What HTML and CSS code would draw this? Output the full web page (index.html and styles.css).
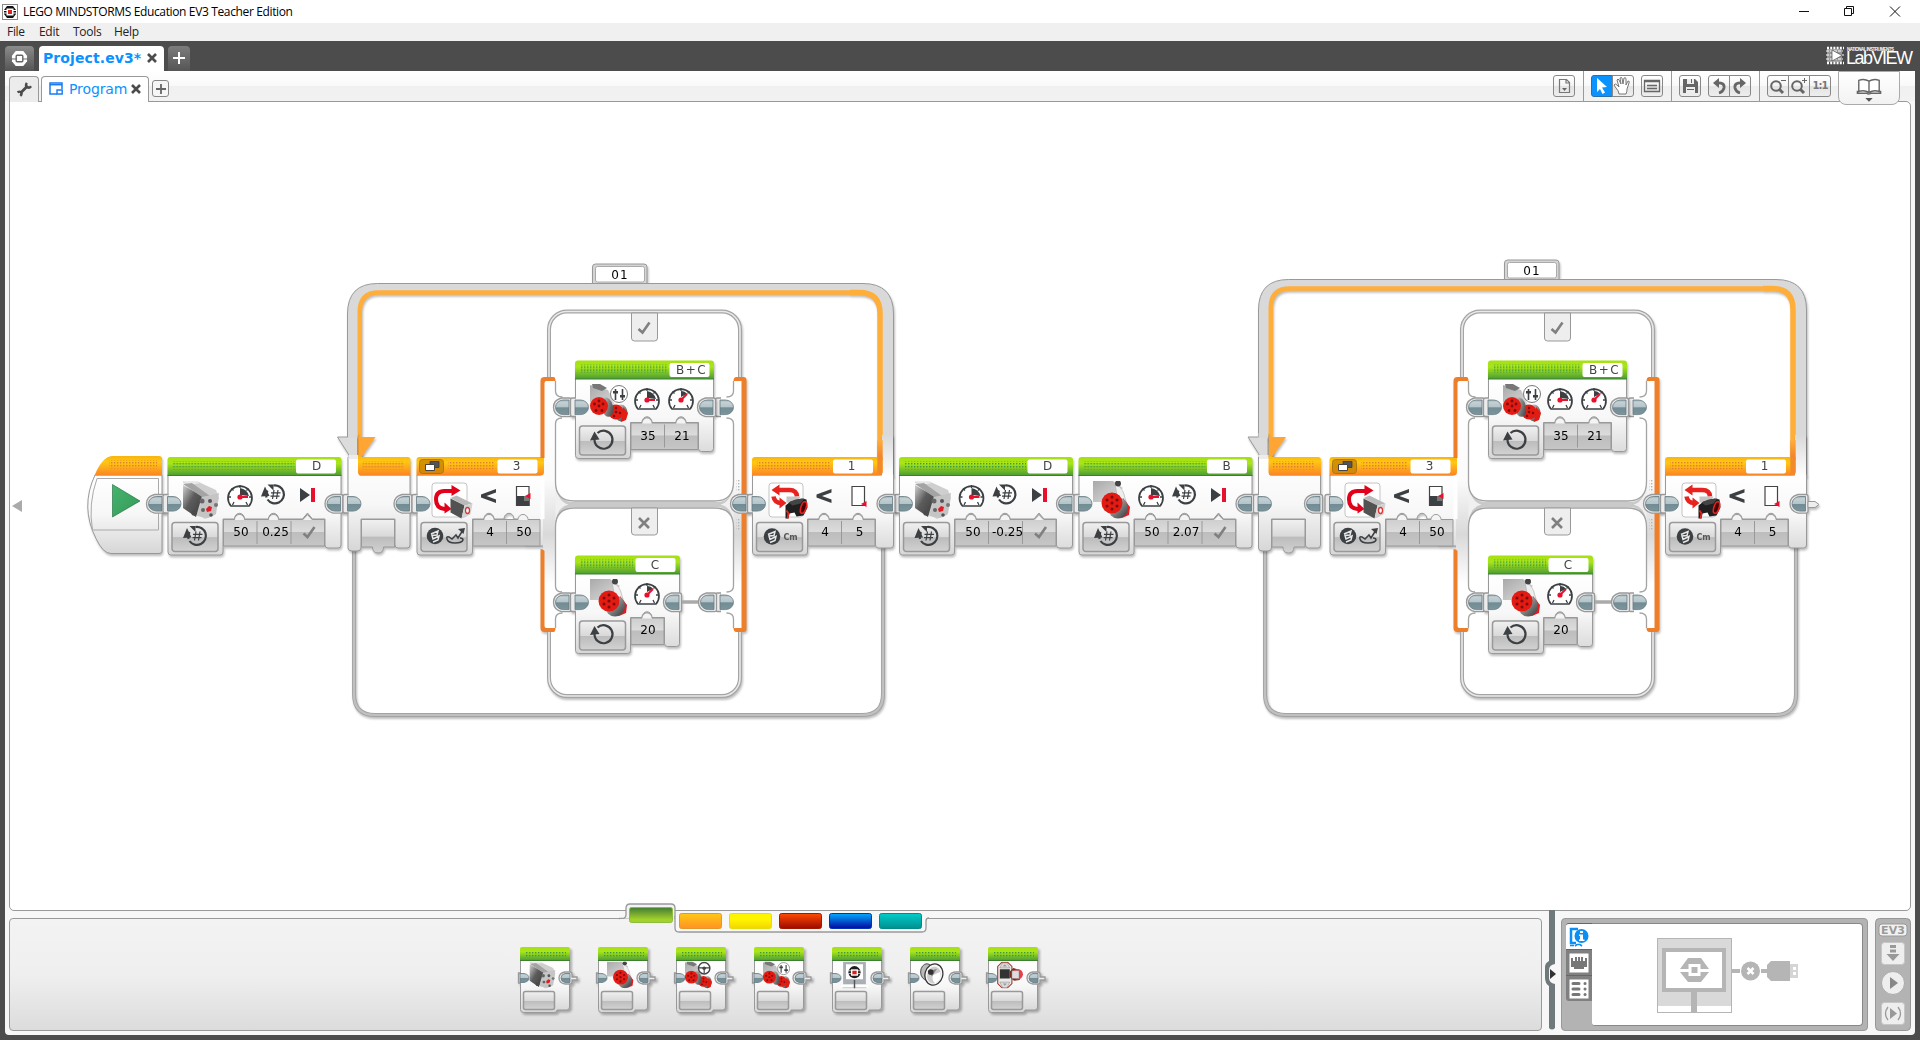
FILE: index.html
```html
<!DOCTYPE html>
<html lang="en">
<head>
<meta charset="utf-8">
<title>LEGO MINDSTORMS Education EV3 Teacher Edition</title>
<link rel="stylesheet" href="styles.css">
</head>
<body>
<svg class="defs" width="0" height="0" aria-hidden="true">
  <defs>
    <linearGradient id="gGreen" x2="0" y2="1"><stop offset="0" stop-color="#a6e010"/><stop offset=".35" stop-color="#a9e51a"/><stop offset="1" stop-color="#4b9c34"/></linearGradient>
    <linearGradient id="gOrange" x2="0" y2="1"><stop offset="0" stop-color="#f9b40c"/><stop offset=".3" stop-color="#ffc814"/><stop offset="1" stop-color="#fb8424"/></linearGradient>
    <linearGradient id="gBody" x2="0" y2="1"><stop offset="0" stop-color="#fff"/><stop offset=".5" stop-color="#f7f7f7"/><stop offset="1" stop-color="#d6d6d6"/></linearGradient>
    <linearGradient id="gParam" x2="0" y2="1"><stop offset="0" stop-color="#c9c9c9"/><stop offset=".55" stop-color="#dcdcdc"/><stop offset=".56" stop-color="#bdbdbd"/><stop offset="1" stop-color="#c6c6c6"/></linearGradient>
    <linearGradient id="gButton" x2="0" y2="1"><stop offset="0" stop-color="#f1f1f1"/><stop offset=".5" stop-color="#d9d9d9"/><stop offset=".52" stop-color="#bcbcbc"/><stop offset="1" stop-color="#d2d2d2"/></linearGradient>
    <linearGradient id="gPort" x2="0" y2="1"><stop offset="0" stop-color="#9db0b6"/><stop offset=".15" stop-color="#c3d0d4"/><stop offset=".5" stop-color="#b5c4c9"/><stop offset=".52" stop-color="#718c94"/><stop offset="1" stop-color="#7d959c"/></linearGradient>
    <linearGradient id="gFade" x2="0" y2="1"><stop offset="0" stop-color="#d9d9d9"/><stop offset="1" stop-color="#fff"/></linearGradient>
    <linearGradient id="gFadeO" x2="0" y2="1"><stop offset="0" stop-color="#ffae3a"/><stop offset="1" stop-color="#f07c28"/></linearGradient>
    <linearGradient id="gColumn" x2="0" y2="1"><stop offset="0" stop-color="#fff"/><stop offset=".4" stop-color="#fbfbfb"/><stop offset=".62" stop-color="#d9d9d9"/><stop offset=".82" stop-color="#fff"/><stop offset="1" stop-color="#fff"/></linearGradient>
    <linearGradient id="gPlay" x2="1" y2="1"><stop offset="0" stop-color="#45b56c"/><stop offset="1" stop-color="#36985a"/></linearGradient>
    <linearGradient id="gMetal" x2="1" y2="1"><stop offset="0" stop-color="#d2d2d2"/><stop offset=".45" stop-color="#5c5c5c"/><stop offset="1" stop-color="#3c3c3c"/></linearGradient>
    <linearGradient id="gPlate" x2="1" y2="1"><stop offset="0" stop-color="#a9a9a9"/><stop offset="1" stop-color="#dedede"/></linearGradient>
    <linearGradient id="gCasing" x2="1" y2="1"><stop offset="0" stop-color="#eee"/><stop offset=".5" stop-color="#888"/><stop offset="1" stop-color="#333"/></linearGradient>
    <pattern id="dotG" width="3" height="3" patternUnits="userSpaceOnUse"><rect width="1.4" height="1.4" fill="#3b9a3c"/></pattern>
    <pattern id="dotO" width="3" height="3" patternUnits="userSpaceOnUse"><rect width="1.4" height="1.4" fill="#e0802a"/></pattern>
    <pattern id="dotX" width="3" height="3" patternUnits="userSpaceOnUse"><rect width="1.4" height="1.4" fill="#b5b5b5"/></pattern>

    <!-- ports -->
    <g id="portIn"><path class="shell" d="M1 37.500H-2.500q-2 0-2 2V54q0 2 2 2H1"/><path class="port" d="M0 39.500h5.500a8 7.300 0 0 1 0 14.600H0z"/></g>
    <g id="portOut"><path class="shell" d="M-.5 37.500h-8q-8 2-8 9.300t8 9.300h8q2 0 2-2V39.500q0-2-2-2z"/><path class="port" d="M-1 39.500h-5.500a8 7.300 0 0 0 0 14.600H-1z"/></g>

    <!-- block bodies with one, two and three parameters -->
    <g id="modeButton"><rect class="button" x="4.500" y="65.500" width="46" height="29" rx="3"/></g>
    <g id="body3">
      <path class="body" d="M.5 18H173.500V88q0 3-3 3H160.500q-3 0-3-3V62H145l-5-6-5 6H111a4.800 5.500 0 0 0-10 0H77a4.800 5.500 0 0 0-10 0H55.500V95q0 3-3 3H3.500q-3 0-3-3Z"/>
      <path class="param" d="M56 62.500H67a5 5 0 0 1 10 0h24a5 5 0 0 1 10 0h24l5-5 5 5h12V89H56Z"/><path class="sep" d="M89.500 64v23M123.500 64v23"/>
      <path class="bump" d="M67.500 63a4.500 5 0 0 1 9 0zM101.500 63a4.500 5 0 0 1 9 0zM136 63l4-4.500 4 4.500z"/>
      <path fill="url(#gGreen)" d="M0 18.500V3q0-3 3-3H171q3 0 3 3V18.500Z"/><path class="rim" d="M0 18.500H174"/>
      <rect fill="url(#dotG)" x="5" y="4" width="122" height="8.500"/><rect class="field" x="128.500" y="2.500" width="40" height="14" rx="2"/>
      <use href="#modeButton"/><use href="#portOut" x="174"/><use href="#portIn"/>
    </g>
    <g id="body2">
      <path class="body" d="M.5 18H138.500V88q0 3-3 3H126.500q-3 0-3-3V62H111a4.800 5.500 0 0 0-10 0H77a4.800 5.500 0 0 0-10 0H55.500V95q0 3-3 3H3.500q-3 0-3-3Z"/>
      <path class="param" d="M56 62.500H67a5 5 0 0 1 10 0h24a5 5 0 0 1 10 0h12V89H56Z"/><path class="sep" d="M89.500 64v23"/>
      <path class="bump" d="M67.500 63a4.500 5 0 0 1 9 0zM101.500 63a4.500 5 0 0 1 9 0z"/>
      <path fill="url(#gGreen)" d="M0 18.500V3q0-3 3-3H136q3 0 3 3V18.500Z"/><path class="rim" d="M0 18.500H139"/>
      <rect fill="url(#dotG)" x="5" y="4" width="87" height="8.500"/><rect class="field" x="94.500" y="2.500" width="40" height="14" rx="2"/>
      <use href="#modeButton"/><use href="#portOut" x="139"/><use href="#portIn"/>
    </g>
    <g id="body1">
      <path class="body" d="M.5 18H104.500V88q0 3-3 3H92.500q-3 0-3-3V62H77a4.800 5.500 0 0 0-10 0H55.500V95q0 3-3 3H3.500q-3 0-3-3Z"/>
      <path class="param" d="M56 62.500H67a5 5 0 0 1 10 0h12V89H56Z"/><path class="bump" d="M67.500 63a4.500 5 0 0 1 9 0z"/>
      <path fill="url(#gGreen)" d="M0 18.500V3q0-3 3-3H102q3 0 3 3V18.500Z"/><path class="rim" d="M0 18.500H105"/>
      <rect fill="url(#dotG)" x="5" y="4" width="53" height="8.500"/><rect class="field" x="60.500" y="2.500" width="40" height="14" rx="2"/>
      <use href="#modeButton"/><use href="#portOut" x="105"/><use href="#portIn"/>
    </g>

    <!-- parameter icons, centred on the origin -->
    <g id="dial"><path class="ink thin" d="M-9 9a12 12 0 1 1 18 0z"/><path class="ink fine" d="M-12 0h3M12 0h-3M0-12v3M-8.500-8.500l2 2M8.500-8.500l-2 2M-7.500 8l1.500-3M7.500 8L6 5"/></g>
    <g id="gaugeHigh"><use href="#dial"/><path fill="#3c4043" d="M0-2V-9q7 1 9 8z"/><circle r="2.600" fill="#e8112d"/><path stroke="#e8112d" stroke-width="2" d="M0 0H8"/></g>
    <g id="gaugeLow"><use href="#dial"/><path fill="#3c4043" d="M0-3V-9q4 0 6 3z"/><circle r="2.600" fill="#e8112d"/><path stroke="#e8112d" stroke-width="2" d="M0 0L6-6"/></g>
    <g id="turns"><path class="ink ring-arrow" d="M-1.500-9A9 9 0 1 1-7.500 5"/><path class="ink ring-arrow" d="M-8.500 3q-.8-4 1-7"/><path fill="#3c4043" d="M-14 2l4-10 4.500 9.500zM-7.500-10h6v6z"/><path class="ink hash" d="M-1-4.500L-2.500 4.500M3-4.500L1.500 4.500M-4-1.700H5.500M-4.500 1.700H4.500"/></g>
    <g id="forever"><path class="ink ring-arrow" d="M-8.500 0a9 9 0 1 0 3-6.500"/><path fill="#3c4043" d="M-13 1L-8.500-8-3.500 0z"/></g>
    <g id="brake"><path fill="#3c4043" d="M-8-7L2 0-8 7z"/><rect x="3" y="-7" width="4" height="14" fill="#e8112d"/></g>
    <path id="tick" class="glyph" d="M-5.500 1L-1.500 4.500 5.500-5.500"/>
    <path id="cross" class="glyph" d="M-5-5L5 5M5-5L-5 5"/>
    <path id="less" d="M7.500-7V-3.500L-2 0 7.500 3.500V7L-7.500 1.500V-1.500z" fill="#3c4043"/>
    <g id="sonic"><circle r="8.300" fill="#3c4043"/><path fill="none" stroke="#e8e8e8" stroke-width="1.500" d="M-4-2L3-5 2-1-3-.5-2 3 4 0 3 4-2 6"/></g>

    <!-- motors and other 38px pictures -->
    <symbol id="medium" viewBox="0 0 38 38"><path fill="#f8f8f8" stroke="#ccc" stroke-width=".7" d="M1 1h15l16 8-12 2z"/><path fill="#cfcfcf" d="M10 3l8-1 16 7 3 8-4 17-10 4-9-5z"/><path fill="url(#gMetal)" d="M1 4L20 15 14 36 1 27z"/><path fill="#a4a4a4" d="M1 3l9-1 18 13-8 1z"/><path fill="#c5c5c5" d="M21 16l16-4-3 21-8 4-11-2z"/><circle cx="12" cy="32" r="2.600" fill="#4a4a4a"/><circle cx="20" cy="20" r="2.500" fill="#666"/><circle cx="28" cy="20" r="2" fill="#555"/><circle cx="34" cy="24" r="2" fill="#777"/><circle cx="21" cy="29" r="2" fill="#666"/><circle cx="29" cy="34" r="1.800" fill="#555"/><path fill="#e31b23" d="M24 28l3-3 3 1-1 4-4 1z"/></symbol>
    <symbol id="large" viewBox="0 0 38 38"><path fill="url(#gPlate)" d="M0 0h20l10 7-16 14H0z"/><path fill="#eee" stroke="#aaa" stroke-width=".6" d="M22 3q8 3 10 14l4 12-9 5-3-20z"/><circle cx="25" cy="2.500" r="3" fill="#444"/><path fill="#e31b23" d="M30 17l7 9-1 8-7 3z"/><ellipse cx="25" cy="27" rx="10" ry="10.500" fill="url(#gCasing)"/><circle cx="19" cy="22" r="10.500" fill="#e31b12"/><g fill="#7a0d0d"><circle cx="19" cy="22" r="1.600"/><circle cx="19" cy="16" r="1.500"/><circle cx="24" cy="19" r="1.500"/><circle cx="24" cy="25" r="1.500"/><circle cx="19" cy="28" r="1.500"/><circle cx="14" cy="25" r="1.500"/><circle cx="14" cy="19" r="1.500"/></g></symbol>
    <symbol id="pair" viewBox="0 0 38 38"><path fill="url(#gPlate)" d="M0 1l18 5 8 17-10 2L0 18z"/><path fill="#777" d="M2 0h8l7 4-5 3-9-3z"/><ellipse cx="31" cy="29" rx="6.500" ry="8.500" fill="url(#gCasing)"/><path fill="#e31b12" d="M33 23l5 6-2 7-5 2z"/><circle cx="26" cy="28" r="7.500" fill="#e31b12"/><ellipse cx="17" cy="23" rx="6" ry="10" fill="url(#gCasing)" transform="rotate(-15 17 23)"/><circle cx="9" cy="22" r="9" fill="#e31b12"/><g fill="#7a0d0d"><circle cx="9" cy="22" r="1.400"/><circle cx="9" cy="17" r="1.400"/><circle cx="4.500" cy="20" r="1.400"/><circle cx="13" cy="20" r="1.400"/><circle cx="6" cy="26.500" r="1.400"/><circle cx="12" cy="26.500" r="1.400"/><circle cx="26" cy="28" r="1.300"/><circle cx="26" cy="24" r="1.200"/><circle cx="30" cy="29" r="1.200"/><circle cx="24" cy="32" r="1.200"/></g></symbol>
    <symbol id="tank" viewBox="0 0 38 38"><use href="#pair" width="38" height="38"/><circle cx="29" cy="10" r="8.500" fill="#fff" stroke="#777"/><path class="ink" stroke-width="1.500" d="M25.500 5v11M32.500 5v11"/><path fill="#3c4043" d="M23 7h5v2.500h-5zM30 11h5v2.500h-5z"/></symbol>
    <symbol id="steer" viewBox="0 0 38 38"><use href="#pair" width="38" height="38"/><circle cx="27" cy="9.500" r="8" fill="#fff" stroke="#444" stroke-width="2"/><path class="ink" d="M19 9h16M27 9v8"/><circle cx="27" cy="9.500" r="2.500" fill="#444"/></symbol>
    <symbol id="display" viewBox="0 0 38 38"><path fill="#a9afb2" d="M3 0h32v32H3z"/><path fill="#fff" d="M7 4h24v21H7zM0 33h16v4H0zm22 0h16v4H22z"/><path fill="#d4d4d4" d="M2 36h34v2H2z"/><circle cx="19" cy="15" r="8.500" fill="#1d1d1d"/><path stroke="#fff" d="M11 13h16M11 17h16"/><rect x="14" y="11" width="10" height="9" fill="#fff"/><rect x="16" y="13" width="6" height="5" fill="#e31b12"/><path stroke="#555" stroke-width="2" d="M19 26v12"/></symbol>
    <symbol id="sound" viewBox="0 0 38 38"><ellipse cx="11" cy="15" rx="10" ry="13" fill="#bbb" stroke="#444" stroke-width="1.500"/><ellipse cx="22" cy="19" rx="14" ry="17" fill="#f6f6f6" stroke="#333" stroke-width="2" transform="rotate(15 22 19)"/><ellipse cx="22" cy="20" rx="10.500" ry="13.500" fill="#ccc" transform="rotate(15 22 20)"/><path fill="#fff" d="M20 20l12-5q2 12-8 18-5-4-4-13z"/><path fill="#888" d="M13 14l14-4-8 12z"/><circle cx="17" cy="15" r="4.500" fill="#333"/></symbol>
    <symbol id="buttons" viewBox="0 0 38 38"><path fill="#e9e9e9" stroke="#a33322" stroke-width="1.500" d="M7 1h8l6 6v24l-6 6H7l-6-6V7z"/><path fill="#ddd" stroke="#777" stroke-width=".6" d="M8 2h6l4 7H4zM4 29h14l-4 8H8z"/><path fill="#333" d="M4 11h14v13H4z"/><path fill="#7b2a22" d="M18 14l5-5 9 3v14l-8 1-6-5z"/><path fill="#999" d="M8 7l3-3 3 3zM8 31l3 3 3-3z"/><circle cx="29" cy="18" r="7.500" fill="#e4404a"/><path fill="#ddd" stroke="#777" stroke-width=".6" d="M21 13h10v11H21z"/></symbol>

    <!-- infrared switch icon and loop-end icon -->
    <g id="switchIcon"><rect class="iconbox" x=".5" y=".5" width="35" height="34" rx="3"/><path fill="none" stroke="#e2001a" stroke-width="4" d="M21 8.500H13Q4.500 8.500 4.500 17T13 26.500H15"/><path fill="#e2001a" d="M20 2.500l9 5.500-9 5.500zM13 20l7 6.500-7 4.500z"/><path fill="#b9b9b9" d="M19 15.500L25 13l16 8-8 2z"/><path fill="#525252" d="M19 16l14 7-3 13-11-6z"/><path fill="#d2d2d2" d="M33 23l8-2-2 11-9 4z"/><ellipse cx="36" cy="28" rx="2" ry="3" fill="#fff" stroke="#d33" stroke-width="1.300"/></g>
    <g id="endIcon"><rect class="iconbox" x=".5" y=".5" width="34" height="34" rx="3"/><path fill="none" stroke="#e8221e" stroke-width="4.500" d="M10 7.500H21Q28 7.500 28.500 14M5 14Q6 20.500 13 20.500"/><path fill="#e8221e" d="M3 7.500L11 2v11zM11 15l7 5.500L11 26z"/><path fill="#c4c4c4" d="M18 14h14l-3 6H18z"/><path fill="#1f1f1f" d="M17 23l5-4 11-3 5 1 1 8-4 8-7 1-2-4-5 1-1 5h-3z"/><path fill="#444" d="M20 20l7-3 9-1-4 5-8 2z"/><ellipse cx="35" cy="25" rx="2.600" ry="6" fill="#400" stroke="#e8221e" stroke-width="1.600" transform="rotate(18 35 25)"/><path fill="none" stroke="#e8221e" stroke-width="1.800" d="M18 28l2 3-1 5"/></g>
    <g id="bounce"><path class="ink arrow-line" d="M-8 3q-1-3 2-2l3 2 4-4 2 3 5-8M-8 3q1 4 8 4t8-3q0-2-3-2"/><path fill="#3c4043" d="M10-8l-7 1 5.500 5z"/></g>

    <!-- loop entry block, origin at its left edge and header top -->
    <g id="loopStart">
      <path fill="#dcdcdc" stroke="#999" d="M0-20H-10L.500-3.500 2 0H10V-20z"/><path fill="#d9d9d9" d="M.5-24h9.500v5H.5z"/>
      <path fill="#ffa533" d="M11-20H28L13.500 1H11z"/>
      <path class="body" d="M.5 0H12V18H62.500V88q0 3-3 3H50.500q-3 0-3-3V62H13.500V91q0 3-4 3H4.500q-4 0-4-3Z"/><path fill="#ececec" d="M1-2h9.500v4H1z"/>
      <path fill="url(#gButton)" stroke="#999" d="M14 62.500H47V90H36q0 6-5.500 6T25 90H14z"/>
      <path fill="url(#gOrange)" d="M10.500-2V15q0 3.500 3.500 3.500H63V3q0-3-3-3H14z"/><rect fill="url(#dotO)" x="15" y="4" width="41" height="8.500"/>
      <use href="#portOut" x="63"/><use href="#portIn"/>
    </g>

    <!-- switch with its two cases -->
    <g id="switchBlock">
      <rect class="frameO" x="549" y="311.500" width="191" height="384.500" rx="18"/><rect class="frameI" x="549" y="311.500" width="191" height="384.500" rx="18"/>
      <path class="body" d="M417 475H545V546H525V519H514a4.800 5.500 0 0 0-10 0H494a4.800 5.500 0 0 0-10 0H472.500V552q0 3-3 3H420q-3 0-3-3z"/>
      <path class="param" d="M473 519.500H484a5 5 0 0 1 10 0h24a5 5 0 0 1 10 0h12V546H473Z"/><path class="sep" d="M506.500 521v23"/>
      <path class="bump" d="M484.500 520a4.500 5 0 0 1 9 0zM518.500 520a4.500 5 0 0 1 9 0z"/>
      <path fill="url(#gColumn)" d="M543 380h13v249h-13z"/><path fill="url(#gColumn)" d="M733 380h9v249h-9z"/>
      <path fill="#fff" d="M540.500 475h4v44h-4z"/>
      <path fill="#c9c9c9" d="M556 484q2 18 18 18h142q16 0 17-18v42q-1-19-17-19H574q-16 0-18 19z"/><path fill="#f0f0f0" d="M555.500 486q3 16 13 18.500-10 2-13 16zM733.500 486q-3 16-13 18.500 10 2 13 16z"/>
      <path fill="#fff" d="M556 400V482q0 19 19 19H714q19 0 19-19V400zM556 600V527q0-19 19-19H714q19 0 19 19V600z"/>
      <path class="edge" d="M555.500 381V391q0 6 7 6M562 418q-6.500 0-6.500 6V482q0 19 19 19H714.500q19 0 19-19V424q0-6-7-6M733.500 381v10q0 6-7 6M562 592q-6.500 0-6.500-6V527q0-19 19-19H714.500q19 0 19 19V586q0 6-7 6M555.500 628V619q0-6 7-6M733.500 628V619q0-6-7-6"/>
      <path fill="url(#gOrange)" d="M416.500 475.500V460q0-3 3-3H544V472q0 3.500-3.500 3.500z"/>
      <path class="ocol" d="M540.500 458V381q0-4 4-4h9q2 0 2 4h-9q-2 0-2 2v75zM540.500 549v79q0 4 4 4h9q2 0 2-4h-9q-2 0-2-2V551q-1-2-4-2z"/>
      <path class="ocol" d="M733.500 381q0-4 3-4h7q3 0 3 3V629q0 3-3 3h-7q-3 0-3-4h8V381z"/>
      <rect fill="url(#dotX)" x="736" y="480" width="4" height="12"/><rect fill="url(#dotX)" x="736" y="518" width="4" height="12"/>
      <rect fill="#c98500" opacity=".8" x="419.500" y="459.500" width="24" height="14" rx="3" stroke="#9a6a10"/><path fill="#555" stroke="#333" stroke-width=".7" d="M430 461.500h9v6h-9z"/><path fill="#fff" stroke="#444" d="M425.500 464.500h9v6h-9z"/>
      <rect fill="url(#dotO)" x="448" y="461" width="46" height="8.500"/><rect class="field" x="497.500" y="459.500" width="40" height="14" rx="2"/>
      <use href="#modeButton" x="416.500" y="457"/><use href="#portIn" x="416.500" y="457"/>
      <use href="#switchIcon" x="431.500" y="482.500"/><use href="#less" x="488.500" y="496"/>
      <path fill="#fff" stroke="#444" stroke-width="1.200" d="M516.500 486.500h12.500v19h-12.500z"/><path fill="#3c4043" d="M516.500 496h13v10h-13z"/><path fill="#777" d="M524 496h5v5h-5z"/><path fill="#e8112d" d="M525 496l5.500-3v6z"/>
      <use href="#sonic" x="435" y="536"/><use href="#bounce" x="455" y="536"/>
      <path class="tab" d="M631.500 313H657.500V338q0 3-3 3h-20q-3 0-3-3zM631.500 508H657.500v24q0 3-3 3h-20q-3 0-3-3z"/>
      <use href="#tick" x="644" y="328"/><use href="#cross" x="644" y="523"/>
      <use href="#portOut" x="570" y="360.500"/><use href="#portOut" x="570" y="555.500"/>
      <use href="#portIn" x="720" y="360.500"/><use href="#portIn" x="720" y="555.500"/>
      <use href="#portOut" x="747" y="457"/>
      <g class="drop"><use href="#body2" x="575" y="360.500"/><use href="#body1" x="575" y="555.500"/></g>
      <path stroke="#aaa" stroke-width="3.500" d="M682 602h20"/><use href="#portOut" x="715" y="555.500"/>
      <use href="#tank" x="590" y="384" width="38" height="38"/><use href="#large" x="590" y="579" width="38" height="38"/>
      <use href="#gaugeHigh" x="647" y="400"/><use href="#gaugeLow" x="681" y="400"/><use href="#gaugeLow" x="647" y="595"/>
      <use href="#forever" x="603" y="439.500"/><use href="#forever" x="603" y="634"/>
    </g>

    <!-- loop exit block -->
    <g id="loopEnd">
      <path class="body" d="M752.500 475H893.500V545q0 3-3 3H878.500q-3 0-3-3V519H863a4.800 5.500 0 0 0-10 0H829a4.800 5.500 0 0 0-10 0H807.500V552q0 3-3 3H755.500q-3 0-3-3z"/>
      <path fill="url(#gFade)" d="M882 435H893V477H882z"/><path fill="url(#gFadeO)" d="M877.300 440h5.400v20h-5.400z"/>
      <path class="param" d="M808 519.500H819a5 5 0 0 1 10 0h24a5 5 0 0 1 10 0h12V546H808Z"/><path class="sep" d="M841.500 521v23"/>
      <path class="bump" d="M819.500 520a4.500 5 0 0 1 9 0zM853.500 520a4.500 5 0 0 1 9 0z"/>
      <path fill="url(#gOrange)" d="M752 475.500V460q0-3 3-3H882.500V472q0 3.500-3.500 3.500z"/><path fill="#f28a2c" d="M877.300 457h5.400v14q0 4-4 4h-1.400z"/>
      <rect fill="url(#dotO)" x="757" y="461" width="74" height="8.500"/><rect class="field" x="833" y="459.500" width="40" height="14" rx="2"/>
      <use href="#modeButton" x="752" y="457"/><use href="#portIn" x="752" y="457"/><use href="#portOut" x="893.500" y="457"/>
      <use href="#endIcon" x="768.500" y="482.500"/><use href="#less" x="824" y="496"/>
      <path fill="#fff" stroke="#444" stroke-width="1.200" d="M852 486.500h12.500v19H852z"/><path fill="#e8112d" d="M861 504l5.500-3v6z"/>
      <use href="#sonic" x="772" y="536.500"/>
    </g>

    <!-- palette block, 50px wide -->
    <g id="mini">
      <path class="body" d="M3.500 14H52.500V61q0 3-3 3H40q0 2.500-3 2.500H6.500q-3 0-3-3z"/><path fill="url(#gGreen)" d="M3 14.500V3q0-2 2-2H51q2 0 2 2V14.500z"/><path class="rim" d="M3 14.500H53"/><rect fill="url(#dotG)" x="8" y="5" width="41" height="6"/>
      <rect class="button" x="6.500" y="45.500" width="31" height="18" rx="2"/>
      <path class="shell" d="M4 27H1.500v10H4"/><path class="port" d="M3 27.500h4q5 1 5 4.500t-5 4.500H3z"/><path class="shell" d="M53 26H48q-6 1-6 6t6 6h5q2 0 2-2v-2h5v-3h-5v-3q0-2-2-2z"/><path class="port" d="M53 27.500h-5q-4 1-4 4.500t4 4.500h5z"/>
    </g>
  </defs>
</svg>

<header class="titlebar">
  <svg class="app-icon" viewBox="0 0 16 16"><rect x=".5" y=".5" width="15" height="15" fill="#fff" stroke="#888"/><path fill="#111" d="M5 2h6l3 4H2zM2 10h12l-3 4H5z"/><path stroke="#111" d="M2 7.500h3M11 7.500h3M2 9h3M11 9h3"/><rect x="4.500" y="4.500" width="7" height="7" fill="#fff"/><rect x="6" y="6" width="4" height="4" fill="#d22"/></svg>
  <h1>LEGO MINDSTORMS Education EV3 Teacher Edition</h1>
  <svg class="window-buttons" viewBox="0 0 110 20"><path fill="none" stroke="#111" d="M3 9.500h10M48.500 6.500h7v7h-7zM50.500 6.500v-2h7v7h-2M94 4.500l10 10M104 4.500l-10 10"/></svg>
</header>
<nav class="menubar"><span class="m-file">File</span><span class="m-edit">Edit</span><span class="m-tools">Tools</span><span class="m-help">Help</span></nav>

<div class="frame">
  <div class="project-tabs">
    <div class="home-tab"><svg viewBox="0 0 18 18"><path fill="#fff" d="M5 1h8l4 5v6l-4 5H5l-4-5V6z"/><path stroke="#666" d="M0 9.500h18"/><rect x="5.500" y="5.500" width="7" height="7" rx="1" fill="#fff" stroke="#666" stroke-width="1.500"/></svg></div>
    <div class="project-tab"><b>Project.ev3*</b><svg viewBox="0 0 10 10"><path stroke="#4c4c4c" stroke-width="2.600" d="M1 1l8 8M9 1L1 9"/></svg></div>
    <div class="add-tab"><svg viewBox="0 0 12 12"><path stroke="#fff" stroke-width="2" d="M6 0v12M0 6h12"/></svg></div>
    <svg class="labview" viewBox="0 0 90 20"><rect x="2" y="3" width="15" height="13" fill="#999"/><path stroke="#fff" stroke-width="2.500" stroke-dasharray="2 1.200" d="M2 2h17M2 17h17"/><path fill="none" stroke="#fff" stroke-width="1.200" stroke-dasharray="3 1" d="M1 5h17M1 9h18M1 13h17"/><path fill="#fff" stroke="#4c4c4c" stroke-width=".7" d="M7 4l10 5.500L7 15z"/><text class="ni" x="22" y="4.500" textLength="47">NATIONAL INSTRUMENTS</text><text class="lv" x="21" y="17.500" textLength="67">LabVIEW</text></svg>
  </div>

  <main class="panel">
    <div class="toolbar">
      <div class="wrench-tab"><svg viewBox="0 0 16 16"><path fill="none" stroke="#4c4c4c" stroke-width="3" d="M3.500 12.500l8-8"/><path fill="none" stroke="#4c4c4c" stroke-width="2.600" d="M10.500 1.500q-2 3 .3 4.500t4.200-1M.5 11.500q3-1.500 4 .3t-1 3.500"/></svg></div>
      <div class="program-tab"><svg class="prog-icon" viewBox="0 0 14 13"><path fill="none" stroke="#1b7cf2" stroke-width="1.500" d="M8 12H1V1h12v6"/><path stroke="#1b7cf2" stroke-width="1.500" d="M1 2.700h12"/><path fill="none" stroke="#1b7cf2" stroke-width="1.400" d="M8 8h5.200v4H8z"/></svg><span>Program</span><svg class="close" viewBox="0 0 10 10"><path stroke="#4c4c4c" stroke-width="2.600" d="M1 1l8 8M9 1L1 9"/></svg></div>
      <div class="add-program"><svg viewBox="0 0 10 10"><path stroke="#666" stroke-width="1.800" d="M5 0v10M0 5h10"/></svg></div>
      <div class="tools">
        <div class="group"><div class="btn"><svg viewBox="0 0 22 22"><path fill="none" stroke="#777" stroke-width="1.200" d="M6.500 4.500h7l3 3v10h-10zM13 5v3h3"/><path fill="#666" d="M9 13h5l-2.500 3z"/></svg></div></div>
        <div class="group"><div class="pair"><div class="btn on"><svg viewBox="0 0 22 22"><path fill="#fff" d="M6 3l10 9-5 .5 3 5-2.500 1.500L9 14l-3 3z"/></svg></div><div class="btn"><svg viewBox="0 0 22 22"><path fill="#fff" stroke="#777" d="M7 19q0-3-3-6l-2-3q1-2 3 0l2 2-2-7q1-2 2 0l2 4-1-6q2-1 2 0l1 6 1-6q2-1 2 1v6l2-4q2 0 1 2l-2 6q0 3-1 5z"/></svg></div></div>
          <div class="btn"><svg viewBox="0 0 22 22"><path fill="none" stroke="#666" stroke-width="1.300" d="M3.500 5.500h15v11h-15zM3 6.500h16M6 10.500h10M6 13.500h10"/></svg></div></div>
        <div class="group"><div class="btn"><svg viewBox="0 0 22 22"><path fill="#666" d="M4 4h12l3 3v11H4z"/><path fill="#eee" d="M8 4h7v5H8zM7 12h9v6H7z"/><path stroke="#666" d="M12.500 4v4M8 14.500h7"/></svg></div>
          <div class="pair"><div class="btn"><svg viewBox="0 0 22 22"><path fill="none" stroke="#666" stroke-width="2.800" d="M8 8q9-1 8 5-1 4-5 5"/><path fill="#666" d="M11 3v10L5 8z"/></svg></div><div class="btn"><svg viewBox="0 0 22 22"><path fill="none" stroke="#666" stroke-width="2.800" d="M14 8q-9-1-8 5 1 4 5 5"/><path fill="#666" d="M11 3v10l6-5z"/></svg></div></div></div>
        <div class="group"><div class="pair"><div class="btn"><svg viewBox="0 0 22 22"><circle cx="9" cy="11" r="4.800" fill="none" stroke="#666" stroke-width="2"/><path stroke="#666" stroke-width="3" d="M12 14l4 4"/><path stroke="#666" d="M14 5.500h5"/></svg></div><div class="btn"><svg viewBox="0 0 22 22"><circle cx="9" cy="11" r="4.800" fill="none" stroke="#666" stroke-width="2"/><path stroke="#666" stroke-width="3" d="M12 14l4 4"/><path stroke="#666" d="M14 5.500h5M16.500 3v5"/></svg></div><div class="btn ratio">1:1</div></div></div>
        <div class="book"><svg viewBox="0 0 28 26"><path fill="#fff" stroke="#666" stroke-width="1.500" d="M14 3q-5-3-11-1v12H1.500v2H12q1 1.500 4 0h10.500v-2H25V2q-6-2-11 1v12M3 14q6-2 11 1 5-3 11-1"/><path fill="#555" d="M10 21h8l-4 4z"/></svg></div>
      </div>
    </div>

    <svg class="canvas" viewBox="10 102 1900 808">
      <path fill="#aaa" d="M12 506l10-6v12z"/>
      <!-- loop cables -->
      <g class="drop">
        <path class="cableO" d="M354 545V694q0 21 21 21H862q21 0 21-21V545M1265 545V694q0 21 21 21H1775q21 0 21-21V545"/><path class="cableI" d="M354 545V694q0 21 21 21H862q21 0 21-21V545M1265 545V694q0 21 21 21H1775q21 0 21-21V545"/>
      </g>
      <g class="drop">
        <path class="ring" d="M347.500 440V314q0-30.500 30-30.500H863q30.500 0 30.500 30.500V476H881.500V313q0-20-20-20H378q-18 0-18 20V440z"/>
        <path class="ring" d="M1258.500 440V310q0-30.500 30-30.500H1776q30.500 0 30.500 30.500V476H1794.500V309q0-20-20-20H1289q-18 0-18 20V440z"/>
        <path class="oring" d="M359.800 458V312q0-19.500 19-19.500H858"/><path class="oring" d="M1270.800 458V308q0-19.500 19-19.500H1771"/>
        <path class="oring right" d="M850 292.500H859q21 0 21 21V470"/><path class="oring right" d="M1763 288.500H1772q21 0 21 21V470"/>
        <path class="namebox" d="M592.500 283.500V267q0-3 3-3H644q3 0 3 3v16.500zM1504.500 279.500V263q0-3 3-3H1556q3 0 3 3v16.500z"/>
        <rect class="name" x="595.500" y="266.500" width="49" height="15.500" rx="2"/><rect class="name" x="1507.500" y="262.500" width="49" height="15.500" rx="2"/>
      </g>
      <!-- start block -->
      <g class="drop"><path class="body" d="M95 475H162V551q0 2.500-3 2.500H111q-8 0-15-15Q80 507 95 475z"/><path fill="none" stroke="#aaa" d="M97 478.500H158.500V530H92.500Q88 504 97 478.500z"/><path fill="url(#gOrange)" d="M94.500 475.500Q102 457 112 456H159q3 0 3 3V475.500z"/><rect fill="url(#dotO)" x="109" y="460" width="48" height="8.500"/><path fill="url(#gPlay)" stroke="#17693a" stroke-width=".6" d="M112.500 484.500L140 501 112.500 517z"/><use href="#portOut" x="163" y="457"/></g>
      <!-- motor blocks -->
      <g class="drop"><use href="#body3" x="167.500" y="457"/><use href="#body3" x="899" y="457"/><use href="#body3" x="1078.500" y="457"/></g>
      <use href="#medium" x="182" y="481" width="38" height="38"/><use href="#gaugeHigh" x="240" y="497"/><use href="#turns" x="275" y="494.500"/><use href="#brake" x="308" y="495"/><use href="#turns" x="197" y="536"/><use href="#tick" x="309" y="532.500"/>
      <use href="#medium" x="914" y="481" width="38" height="38"/><use href="#gaugeHigh" x="971.500" y="497"/><use href="#turns" x="1006.500" y="494.500"/><use href="#brake" x="1040" y="495"/><use href="#turns" x="928.500" y="536"/><use href="#tick" x="1040.500" y="532.500"/>
      <use href="#large" x="1093" y="481" width="38" height="38"/><use href="#gaugeHigh" x="1151" y="497"/><use href="#turns" x="1186" y="494.500"/><use href="#brake" x="1219" y="495"/><use href="#turns" x="1108" y="536"/><use href="#tick" x="1220" y="532.500"/>
      <!-- loops -->
      <g class="drop"><use href="#loopStart" x="347.500" y="457"/><use href="#loopStart" x="1258" y="457"/></g>
      <g class="drop"><use href="#switchBlock"/><use href="#switchBlock" x="913"/></g>
      <g class="drop"><use href="#loopEnd"/><use href="#loopEnd" x="913"/><path fill="#eee" stroke="#999" d="M1808 501.500h7l4 3-4 3h-7z"/></g>

      <g class="port-name"><text x="316.500" y="470">D</text><text x="1047.500" y="470">D</text><text x="1226.500" y="470">B</text><text x="516.500" y="470">3</text><text x="1429.500" y="470">3</text><text x="851.500" y="470">1</text><text x="1764.500" y="470">1</text><text x="691.500" y="374" class="spread">B+C</text><text x="1604.500" y="374" class="spread">B+C</text><text x="655" y="568.500">C</text><text x="1568" y="568.500">C</text></g>
      <g class="value">
        <text x="241" y="536">50</text><text x="275.500" y="536">0.25</text><text x="973" y="536">50</text><text x="1007.500" y="536">-0.25</text><text x="1152" y="536">50</text><text x="1186" y="536">2.07</text>
        <text x="490" y="536">4</text><text x="524" y="536">50</text><text x="1403" y="536">4</text><text x="1437" y="536">50</text>
        <text x="648" y="440">35</text><text x="682" y="440">21</text><text x="1561" y="440">35</text><text x="1595" y="440">21</text>
        <text x="648" y="634">20</text><text x="1561" y="634">20</text>
        <text x="825" y="536">4</text><text x="859.500" y="536">5</text><text x="1738" y="536">4</text><text x="1772.500" y="536">5</text>
        <text x="620" y="279" class="wide">01</text><text x="1532" y="275" class="wide">01</text>
      </g>
      <g class="unit"><text x="790.500" y="539.500">Cm</text><text x="1703.500" y="539.500">Cm</text></g>
    </svg>

    <div class="bottom">
      <section class="palette">
        <svg class="strip" viewBox="0 0 310 36"><path fill="#f7f7f7" d="M8 8h302v6H8z"/><path fill="#f3f3f3" stroke="#999" stroke-width="1.300" d="M0 15.500H3q4 0 4-4V5q0-4 4-4H52q4 0 4 4V16"/><path fill="#f8f8f8" stroke="#999" stroke-width="1.300" d="M56 13V25q0 4 4 4H303q4 0 4-4V18q0-3 3-3"/><path fill="#f3f3f3" d="M1 16h54v4H1z"/>
          <g stroke-width="1"><rect class="s-green" x="10.500" y="4.500" width="43" height="15" rx="2"/><rect class="s-orange" x="60.500" y="10.500" width="42" height="15" rx="2"/><rect class="s-yellow" x="110.500" y="10.500" width="42" height="15" rx="2"/><rect class="s-red" x="160.500" y="10.500" width="42" height="15" rx="2"/><rect class="s-blue" x="210.500" y="10.500" width="42" height="15" rx="2"/><rect class="s-teal" x="260.500" y="10.500" width="42" height="15" rx="2"/></g>
          <defs><linearGradient id="sGreen" x2="0" y2="1"><stop offset="0" stop-color="#427c33"/><stop offset=".8" stop-color="#a3d12a"/></linearGradient><linearGradient id="sOrange" x2="0" y2="1"><stop offset="0" stop-color="#ffc814"/><stop offset="1" stop-color="#ff9225"/></linearGradient><linearGradient id="sYellow" x2="0" y2="1"><stop offset=".4" stop-color="#fff500"/><stop offset="1" stop-color="#f3d500"/></linearGradient><linearGradient id="sRed" x2="0" y2="1"><stop offset="0" stop-color="#ff4a00"/><stop offset="1" stop-color="#9c0a00"/></linearGradient><linearGradient id="sBlue" x2="0" y2="1"><stop offset="0" stop-color="#00aaff"/><stop offset="1" stop-color="#0008a0"/></linearGradient><linearGradient id="sTeal" x2="0" y2="1"><stop offset="0" stop-color="#00cdca"/><stop offset="1" stop-color="#008f90"/></linearGradient></defs></svg>
        <div class="blocks">
          <svg viewBox="0 0 64 70"><use href="#mini"/><use href="#medium" x="12" y="15.500" width="27" height="27"/></svg>
          <svg viewBox="0 0 64 70"><use href="#mini"/><use href="#large" x="12" y="15.500" width="27" height="27"/></svg>
          <svg viewBox="0 0 64 70"><use href="#mini"/><use href="#steer" x="12" y="15.500" width="27" height="27"/></svg>
          <svg viewBox="0 0 64 70"><use href="#mini"/><use href="#tank" x="12" y="15.500" width="27" height="27"/></svg>
          <svg viewBox="0 0 64 70"><use href="#mini"/><use href="#display" x="12" y="15.500" width="27" height="27"/></svg>
          <svg viewBox="0 0 64 70"><use href="#mini"/><use href="#sound" x="13" y="16.500" width="24" height="24"/></svg>
          <svg viewBox="0 0 64 70"><use href="#mini"/><use href="#buttons" x="12" y="15.500" width="27" height="27"/></svg>
        </div>
      </section>
      <svg class="splitter" viewBox="0 0 14 121"><path fill="#6f787b" d="M5 0h6v118q-3 3-6 0V76q-4-3-4-8V57q0-4 4-6z"/><path fill="#f7f7f7" d="M11 54q-6 1-6 6v8q0 5 6 6z"/><path fill="#333" d="M6 59l6 5-6 5z"/></svg>
      <section class="hardware">
        <div class="hw-tabs">
          <div class="hw-tab active"><svg viewBox="0 0 20 20"><path fill="none" stroke="#0a8ff5" stroke-width="2.500" d="M9 2H2v14h5"/><circle cx="12.500" cy="9" r="7" fill="#0a8ff5"/><path fill="#fff" d="M11 4h3v2h-3zM10 7.500h4v5h1.500V14H10v-1.500h1V9h-1z"/><path fill="none" stroke="#0a8ff5" stroke-width="1.600" d="M1 18.500h4M6 19l2-1.500h3l2 1.500"/></svg></div>
          <div class="hw-tab"><svg viewBox="0 0 20 20"><rect width="19" height="19" x=".5" y=".5" fill="#fff"/><path fill="#777" d="M2 5h2v3h2V4h2v4h1V4h2v4h1V4h2v4h2V5h2v9h-3v2H5v-2H2z"/></svg></div>
          <div class="hw-tab"><svg viewBox="0 0 20 20"><rect width="19" height="19" x=".5" y=".5" fill="#fff"/><path stroke="#777" stroke-width="3" stroke-linecap="round" d="M4 4.500h6M4 10h6M4 15.500h6M16 4.500h.1M16 10h.1M16 15.500h.1"/></svg></div>
        </div>
        <div class="hw-view"><svg viewBox="0 0 142 76"><rect x=".5" y=".5" width="74" height="74" fill="#fff" stroke="#b5b5b5"/><path fill="#d9d9d9" d="M1 1h73v67H1z"/><path fill="#fff" stroke="#b5b5b5" stroke-width="4" d="M7 12h60v40H7z"/><path fill="#b5b5b5" d="M34 54h6v21h-6zM31 20h13l8 11H23zM23 34h29l-8 10H31z"/><path fill="#b5b5b5" stroke="#fff" stroke-width="3" d="M33 27.500h9v9h-9z"/><path stroke="#b5b5b5" stroke-width="4" d="M75 33h8M104 33h8"/><circle cx="93.500" cy="33" r="9.500" fill="#b5b5b5"/><path stroke="#fff" stroke-width="2.500" d="M90.500 30l6 6M96.500 30l-6 6"/><path fill="#b5b5b5" d="M114 23h19v20h-19l-4-4V27z"/><path fill="#d5d5d5" d="M133 26h8v14h-8z"/><path fill="#fff" d="M136 29h3v3h-3zM136 34h3v3h-3z"/></svg></div>
      </section>
      <svg class="controls" viewBox="0 0 36 113"><rect x=".5" y=".5" width="35" height="112" rx="4" fill="#b3b3b3" stroke="#969696"/><rect x="4" y="6" width="28" height="12" rx="3" fill="#f1f1f1" stroke="#999"/><text x="18" y="16" textLength="24">EV3</text><rect x="6.500" y="24.500" width="23" height="22" rx="3" fill="#eee" stroke="#c6c6c6"/><path fill="#999" d="M15 27h6v3h-6zM15 31.500h6v3h-6zM11.500 36h13L18 43z"/><circle cx="18" cy="65" r="11.500" fill="#eee" stroke="#aaa"/><path fill="#888" d="M15 59l8 6-8 6z"/><rect x="6.500" y="84.500" width="23" height="22" rx="3" fill="#eee" stroke="#c6c6c6"/><path fill="#999" d="M15 90l7 5.500-7 5.500z"/><path fill="none" stroke="#999" stroke-width="1.300" d="M13 89q-5 6.500 0 13M23 89q5 6.500 0 13"/></svg>
    </div>
  </main>
</div>
</body>
</html>
```
FILE: styles.css
```css
* { box-sizing: border-box; }
body { margin: 0; width: 1920px; height: 1040px; overflow: hidden; background: #4c4c4c; font-family: "Open Sans", "Noto Sans", sans-serif; }
svg { display: block; overflow: visible; }
.defs { position: absolute; }

.titlebar { display: flex; align-items: center; height: 23px; background: #fff; padding-left: 2px; }
.app-icon { width: 16px; height: 16px; }
.titlebar h1 { margin: 0 0 0 5px; font-size: 12px; font-weight: 400; line-height: 23px; letter-spacing: -.36px; color: #000; white-space: nowrap; }
.window-buttons { width: 110px; height: 20px; margin-left: auto; margin-right: 14px; }
.menubar { display: flex; height: 18px; background: #f0f0f0; font-size: 12px; line-height: 18px; color: #222; letter-spacing: -.3px; padding-left: 7px; }
.m-file { width: 32px; } .m-edit { width: 34px; } .m-tools { width: 41px; }

.frame { padding: 0 5px; }
.project-tabs { display: flex; align-items: flex-end; height: 30px; }
.home-tab { width: 29px; height: 25px; border-radius: 4px 4px 0 0; background: linear-gradient(#8b8b8b, #555); display: flex; align-items: center; justify-content: center; padding-bottom: 1px; }
.home-tab svg { width: 17px; height: 17px; }
.project-tab { display: flex; align-items: center; gap: 6px; width: 125px; height: 25px; margin-left: 5px; padding: 0 0 2px 4px; border-radius: 4px 4px 0 0; background: #fff; color: #0a92ff; font-family: "DejaVu Sans", sans-serif; font-size: 14px; letter-spacing: .1px; }
.project-tab svg { width: 10px; height: 10px; }
.add-tab { width: 22px; height: 25px; margin-left: 4px; border-radius: 4px 4px 0 0; background: linear-gradient(#7c7c7c, #555); display: flex; align-items: center; justify-content: center; padding-bottom: 1px; }
.add-tab svg { width: 12px; height: 12px; }
.labview { width: 90px; height: 20px; margin-left: auto; margin-bottom: 5px; fill: #fff; font-family: "Liberation Sans", sans-serif; }
.ni { font-size: 4.500px; font-weight: 700; } .lv { font-size: 18px; }

.panel { height: 964px; padding: 0 4px 4px; background: #f7f7f7; border-radius: 0 0 4px 4px; }
.toolbar { display: flex; height: 30px; margin: 0 -4px; padding-left: 4px; background: linear-gradient(#fff, #f9f9f9 50%, #f0f0f0 51%, #f2f2f2); }
.wrench-tab { width: 30px; height: 26px; margin-top: 5px; border: 1px solid #999; border-bottom: 0; border-radius: 4px 4px 0 0; background: #ececec; padding: 4px 7px; }
.wrench-tab svg { width: 15px; height: 16px; }
.program-tab { position: relative; z-index: 1; display: flex; align-items: center; width: 108px; height: 26px; margin: 5px 0 0 2px; padding: 0 0 2px 7px; border: 1px solid #999; border-bottom: 0; border-radius: 4px 4px 0 0; background: #fff; color: #0a92ff; font: 14px "DejaVu Sans", sans-serif; letter-spacing: -.1px; }
.prog-icon { width: 14px; height: 13px; margin-right: 6px; }
.close { width: 10px; height: 10px; margin-left: 4px; }
.add-program { width: 17px; height: 17px; margin: 9px 0 0 3px; border: 1px solid #888; border-radius: 3px; background: #f6f6f6; padding: 2.500px; }
.add-program svg { width: 10px; height: 10px; }
.tools { display: flex; margin-left: auto; padding-right: 15px; }
.group { display: flex; align-items: flex-start; gap: 7px; padding: 4px 8px 0 7px; border-right: 1px solid #999; height: 30px; }
.group:nth-child(4) { border-right: 0; padding-right: 7px; }
.btn { width: 22px; height: 22px; border: 1px solid #888; border-radius: 3px; background: linear-gradient(#fff, #f3f3f3 50%, #e3e3e3 51%, #eee); }
.btn svg { width: 22px; height: 22px; margin: -1px; }
.pair { display: flex; }
.pair .btn + .btn { margin-left: -1px; border-radius: 0 3px 3px 0; }
.pair .btn:not(:last-child) { border-top-right-radius: 0; border-bottom-right-radius: 0; }
.btn.on { background: #0a92ff; border-color: #2c6ea8; }
.ratio { color: #777; font: 700 10px/20px "DejaVu Sans", sans-serif; text-align: center; letter-spacing: -1px; }
.book { position: relative; z-index: 1; width: 62px; height: 34px; padding: 6px 17px; border: 1px solid #aaa; border-radius: 0 0 8px 8px; background: linear-gradient(#fff, #f2f2f2); }
.book svg { width: 26px; height: 25px; }

.canvas { width: 1902px; height: 810px; border: 1px solid #999; border-radius: 0 5px 5px 5px; background: #fff; overflow: hidden; }
.drop { filter: drop-shadow(1.500px 2px 1.200px rgba(0,0,0,.26)); }
.body { fill: url(#gBody); stroke: #999; }
.param { fill: url(#gParam); stroke: #999; }
.bump { fill: #f4f4f4; }
.sep { stroke: #999; }
.rim { stroke: #3c8030; stroke-width: 1; }
.field { fill: #fff; }
.button { fill: url(#gButton); stroke: #999; stroke-width: 1.500; }
.shell { fill: #ececec; stroke: #999; stroke-width: 1.300; }
.port { fill: url(#gPort); stroke: #667a82; stroke-width: .8; }
.ink { fill: none; stroke: #3c4043; stroke-width: 1.600; }
.ink.ring-arrow { stroke-width: 2.200; }
.ink.arrow-line { stroke-width: 1.500; }
.ink.thin { fill: #fff; stroke-width: 1.700; }
.ink.fine { stroke-width: 1.300; }
.ink.hash { stroke-width: 1.200; }
.glyph { fill: none; stroke: #808080; stroke-width: 2.600; }
.iconbox { fill: #fff; stroke: #c4c4c4; }
.frameO { fill: #fff; stroke: #a5a5a5; stroke-width: 4; }
.frameI { fill: none; stroke: #e9e9e9; stroke-width: 1.600; }
.edge { fill: none; stroke: #a3a3a3; stroke-width: 1.300; }
.ocol { fill: #ed7f2b; }
.tab { fill: #eee; stroke: #999; }
.cableO { fill: none; stroke: #a3a3a3; stroke-width: 4; }
.cableI { fill: none; stroke: #c0c0c0; stroke-width: 2.200; }
.ring { fill: #d9d9d9; stroke: #999; }
.oring { fill: none; stroke: #ffae3a; stroke-width: 4.600; }
.oring.right { stroke-width: 5.500; }
.namebox { fill: #d5d5d5; stroke: #999; }
.name { fill: #fff; stroke: #aaa; }
.port-name, .value, .unit { font: 12px "DejaVu Sans", sans-serif; text-anchor: middle; }
.port-name { fill: #444; }
.value { fill: #000; }
.wide { letter-spacing: 1px; }
.spread { letter-spacing: 1.500px; }
.unit text { font-size: 8px; font-weight: 700; fill: #555; }

.bottom { display: flex; height: 113px; margin-top: 7px; }
.palette { width: 1533px; border: 1px solid #999; border-radius: 4px; background: linear-gradient(#f3f3f3, #efefef 50%, #dcdcdc); }
.strip { width: 310px; height: 36px; margin: -16px 0 0 609px; }
.blocks { display: flex; gap: 14px; margin: 7px 0 0 507px; }
.blocks svg { width: 64px; height: 70px; filter: drop-shadow(2px 2px 1px rgba(0,0,0,.28)); }
.s-green { fill: url(#sGreen); stroke: #8abd40; } .s-orange { fill: url(#sOrange); stroke: #e8952c; } .s-yellow { fill: url(#sYellow); stroke: #e5dc10; }
.s-red { fill: url(#sRed); stroke: #a31800; } .s-blue { fill: url(#sBlue); stroke: #0530b8; } .s-teal { fill: url(#sTeal); stroke: #008a8a; }
.splitter { width: 14px; height: 121px; margin: -8px 3px 0 2px; }
.hardware { display: flex; width: 307px; padding: 4px; border: 1px solid #999; border-radius: 4px; background: #b3b3b3; }
.hw-tab { width: 26px; height: 26px; padding: 3px; background: #808080; border-top: 1px solid #666; }
.hw-tab svg { width: 20px; height: 20px; }
.hw-tab.active { background: #fff; border-radius: 3px 0 0 0; }
.hw-tab:last-child { border-radius: 0 0 0 3px; }
.hw-view { flex: 1; height: 103px; background: #fff; border: 1px solid #888; border-left: 0; border-radius: 0 4px 4px 3px; padding: 14px 0 0 65px; }
.hw-view svg { width: 142px; height: 76px; }
.controls { width: 36px; height: 113px; margin-left: 7px; }
.controls text { font: 700 11px "DejaVu Sans", sans-serif; fill: #999; text-anchor: middle; }
```
